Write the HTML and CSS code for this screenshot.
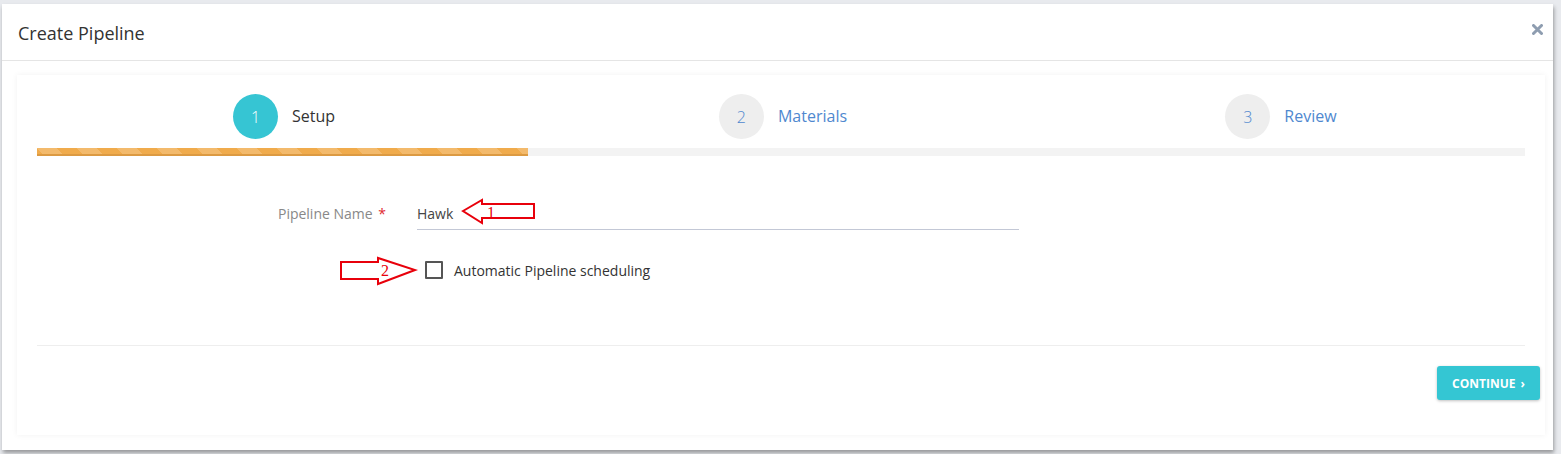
FILE: index.html
```html
<!DOCTYPE html>
<html>
<head>
<meta charset="utf-8">
<link rel="stylesheet" href="styles.css">
</head>
<body>
<div class="modal">
  <div class="modal-header">
    <h4 class="modal-title">Create Pipeline</h4>
    <button class="close" aria-label="Close">
      <svg width="11" height="11" viewBox="0 0 11 11"><path d="M1.5 1.5 L9.5 9.5 M9.5 1.5 L1.5 9.5" stroke="#8e9db0" stroke-width="3" stroke-linecap="round"/></svg>
    </button>
  </div>
  <div class="modal-body">
    <div class="card">
      <div class="content">
        <div class="steps">
          <div class="step active"><span class="num">1</span><span class="label">Setup</span></div>
          <div class="step"><span class="num">2</span><span class="label">Materials</span></div>
          <div class="step"><span class="num">3</span><span class="label">Review</span></div>
        </div>
        <div class="progress"><div class="progress-bar" style="width:33%"></div></div>

        <div class="form">
          <div class="form-row">
            <label class="form-label">Pipeline Name <span class="req">*</span></label>
            <div class="input">Hawk</div>
          </div>
          <div class="form-row">
            <span></span>
            <label class="check"><span class="box"></span><span>Automatic Pipeline scheduling</span></label>
          </div>
          <svg class="anno anno1" width="76" height="28" viewBox="0 0 76 28">
            <polygon points="2,13 21,2 21,6 73,6 73,20 21,20 21,25" fill="none" stroke="#e8000b" stroke-width="2" stroke-linejoin="miter"/>
            <text x="26" y="20" class="anno-num">1</text>
          </svg>
          <svg class="anno anno2" width="80" height="32" viewBox="0 0 80 32">
            <polygon points="2,6 39,6 39,2 76,14 39,28 39,23 2,23" fill="none" stroke="#e8000b" stroke-width="2" stroke-linejoin="miter"/>
            <text x="42" y="20" class="anno-num">2</text>
          </svg>
        </div>
      </div>
      <div class="footer">
        <button class="btn">CONTINUE <span class="chev">›</span></button>
      </div>
    </div>
  </div>
</div>
</body>
</html>
```

FILE: styles.css
```css
* { box-sizing: border-box; }
html, body { margin: 0; }
body {
  width: 1561px;
  height: 454px;
  background: #e8eaee;
  font-family: "Open Sans", "Noto Sans", sans-serif;
  color: #333;
  padding: 4px 8px 0 2px;
  overflow: hidden;
}
.modal {
  background: #fff;
  height: 446px;
  box-shadow: 1px 3px 4px rgba(0,0,0,0.35);
}
.modal-header {
  height: 57px;
  border-bottom: 1px solid #e5e5e5;
  display: flex;
  align-items: center;
  justify-content: space-between;
  padding: 0 10px 3px 16px;
}
.modal-title {
  margin: 4px 0 0;
  font-size: 18px;
  font-weight: 400;
  color: #333;
}
.close {
  border: 0;
  background: none;
  padding: 0;
  width: 11px;
  height: 11px;
  display: flex;
  margin-bottom: 2px;
}
.modal-body {
  padding: 14px 8px 14px 15px;
}
.card {
  background: #fff;
  box-shadow: 0 0 6px rgba(0,0,0,0.06);
  padding: 19px 5px 35px 20px;
  height: 360px;
}
.content { margin-right: 15px; }
.steps {
  display: grid;
  grid-template-columns: 1fr 1fr 1fr;
}
.step {
  display: flex;
  justify-content: center;
  align-items: center;
  gap: 14px;
}
.step .num {
  width: 45px;
  height: 45px;
  border-radius: 50%;
  background: #eeeeee;
  color: #4f88cf;
  display: flex;
  align-items: center;
  justify-content: center;
  font-size: 16px;
  font-weight: 300;
}
.step .label {
  font-size: 16px;
  font-weight: 400;
  color: #4f88cf;
  margin-top: -2px;
}
.step.active .num { background: #36c5d3; color: #fff; }
.step.active .label { color: #333; }
.step:nth-child(1) { padding-right: 2px; }
.step:nth-child(2) { padding-left: 4px; }
.step:nth-child(3) { padding-left: 8px; }
.progress {
  margin-top: 9px;
  height: 8px;
  background: #f3f3f3;
}
.progress-bar {
  height: 8px;
  background-color: #f0ab4c;
  background-image: linear-gradient(45deg, rgba(255,255,255,.18) 25%, transparent 25%, transparent 50%, rgba(255,255,255,.18) 50%, rgba(255,255,255,.18) 75%, transparent 75%, transparent);
  background-size: 40px 40px;
  border-bottom: 2px solid #dc9a42;
}
.form {
  position: relative;
  margin-top: 40px;
}
.form-row {
  display: grid;
  grid-template-columns: 349px 602px;
  column-gap: 31px;
  align-items: center;
}
.form-label {
  text-align: right;
  font-size: 14px;
  color: #888;
  padding-top: 1px;
}
.req { color: #e0282e; margin-left: 2px; }
.input {
  height: 34px;
  border-bottom: 1px solid #c3c8d6;
  font-size: 14px;
  color: #444;
  display: flex;
  align-items: center;
  padding-top: 1px;
}
.form-row + .form-row { margin-top: 28px; }
.check {
  display: flex;
  align-items: center;
  gap: 11px;
  padding-left: 8px;
  font-size: 14px;
  color: #333;
  height: 24px;
}
.box {
  width: 18px;
  height: 18px;
  border: 2px solid #555;
  border-radius: 1px;
}
.anno {
  position: absolute;
}
.anno1 { left: 424px; top: 2px; }
.anno2 { left: 302px; top: 60px; }
.anno-num {
  font-family: "Liberation Serif", serif;
  font-size: 16px;
  fill: #e8000b;
}
.footer {
  margin-top: 63px;
  border-top: 1px solid #eeeeee;
  margin-right: 15px;
  position: relative;
}
.btn {
  position: absolute;
  right: -15px;
  top: 20px;
  height: 34px;
  width: 103px;
  border: 0;
  border-radius: 3px;
  background: #34c6d3;
  color: #fff;
  font-family: "Open Sans", "Noto Sans", sans-serif;
  font-weight: 700;
  font-size: 12px;
  box-shadow: 0 1px 3px rgba(0,0,0,0.25);
  padding: 0;
}
.chev { margin-left: 2px; font-weight: 700; }
```
